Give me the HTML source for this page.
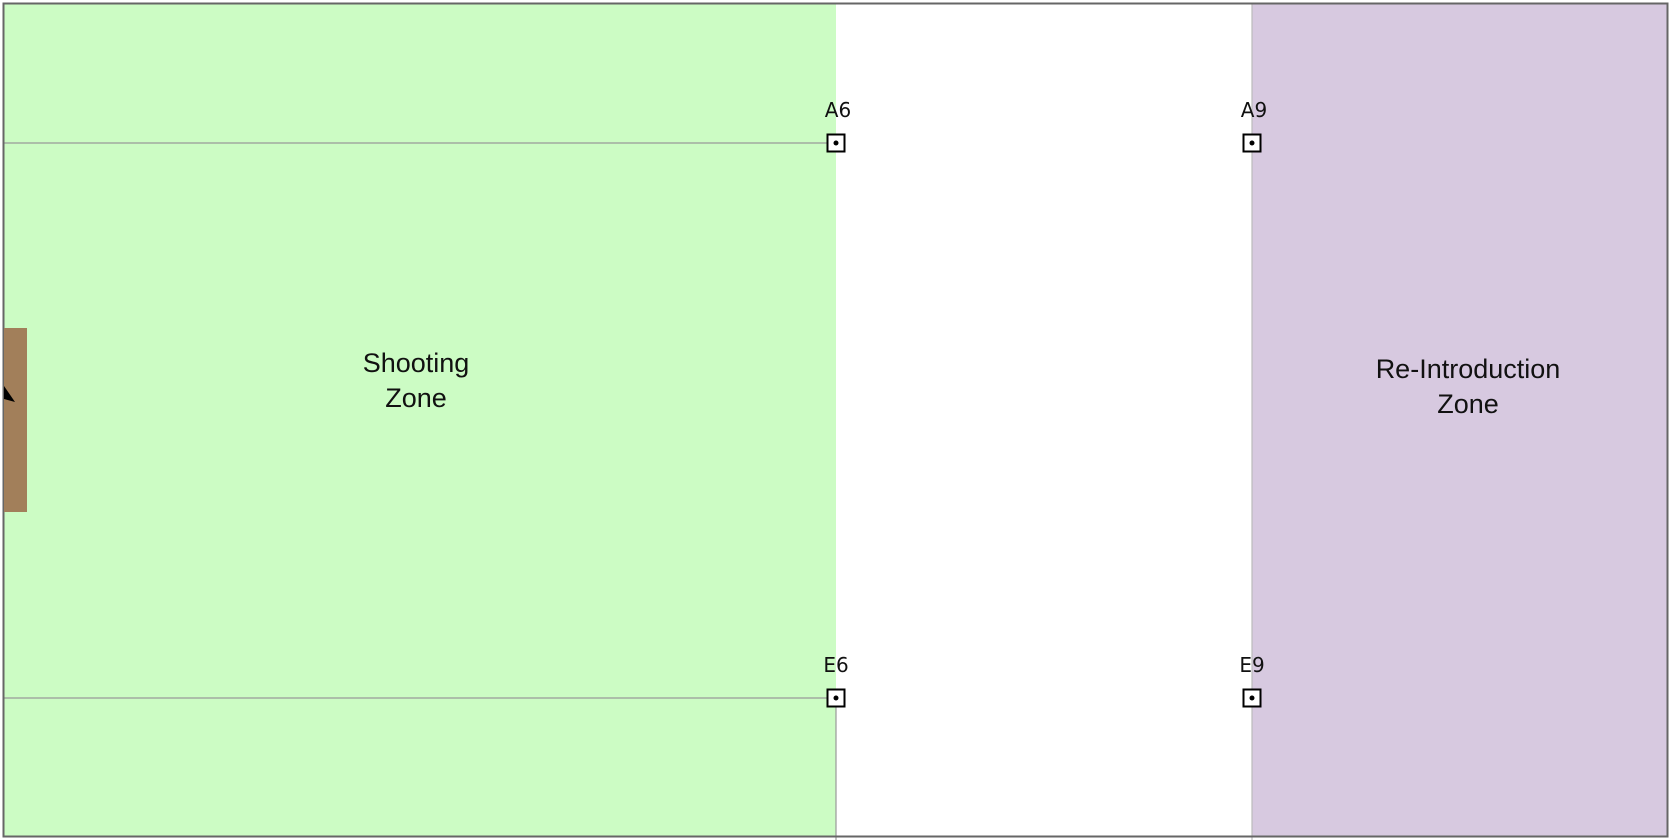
<!DOCTYPE html>
<html><head><style>
html,body{margin:0;padding:0;background:#fff;}
body{width:1673px;height:840px;position:relative;overflow:hidden;font-family:"Liberation Sans",sans-serif;}
</style></head><body>
<svg width="1673" height="840" style="position:absolute;left:0;top:0">
<rect x="4" y="4" width="832" height="833" fill="#ccfcc4"/>
<rect x="1252" y="4" width="415" height="833" fill="#d7c9e0"/>
<line x1="4" y1="143" x2="827" y2="143" stroke="#999" stroke-width="1.2"/>
<line x1="4" y1="698" x2="827" y2="698" stroke="#999" stroke-width="1.2"/>
<line x1="836" y1="707" x2="836" y2="840" stroke="#999" stroke-width="1.2"/>
<line x1="1252" y1="4" x2="1252" y2="840" stroke="#bbb" stroke-width="1.2"/>
<rect x="3.5" y="3.5" width="1664" height="833" fill="none" stroke="#666" stroke-width="2"/>
<rect x="4" y="328" width="23" height="184" fill="#a27f5a"/>
<polygon points="4,386 15,402 4,399" fill="#000"/>
<g fill="#fff" stroke="#000" stroke-width="2">
<rect x="827.5" y="134.5" width="17" height="17"/>
<rect x="1243.5" y="134.5" width="17" height="17"/>
<rect x="827.5" y="689.5" width="17" height="17"/>
<rect x="1243.5" y="689.5" width="17" height="17"/>
</g>
<g fill="#000">
<circle cx="836" cy="143" r="2.5"/><circle cx="1252" cy="143" r="2.5"/>
<circle cx="836" cy="698" r="2.5"/><circle cx="1252" cy="698" r="2.5"/>
</g>
<g font-family="DejaVu Sans, Liberation Sans, sans-serif" font-size="20" text-anchor="middle" fill="#111">
<text x="838" y="117">A6</text><text x="1254" y="117">A9</text>
<text x="836" y="672">E6</text><text x="1252" y="672">E9</text>
</g>
<g font-family="Liberation Sans, sans-serif" font-size="27" text-anchor="middle" fill="#111">
<text x="416" y="372">Shooting</text><text x="416" y="407">Zone</text>
<text x="1468" y="378">Re-Introduction</text><text x="1468" y="413">Zone</text>
</g>
</svg>
</body></html>
